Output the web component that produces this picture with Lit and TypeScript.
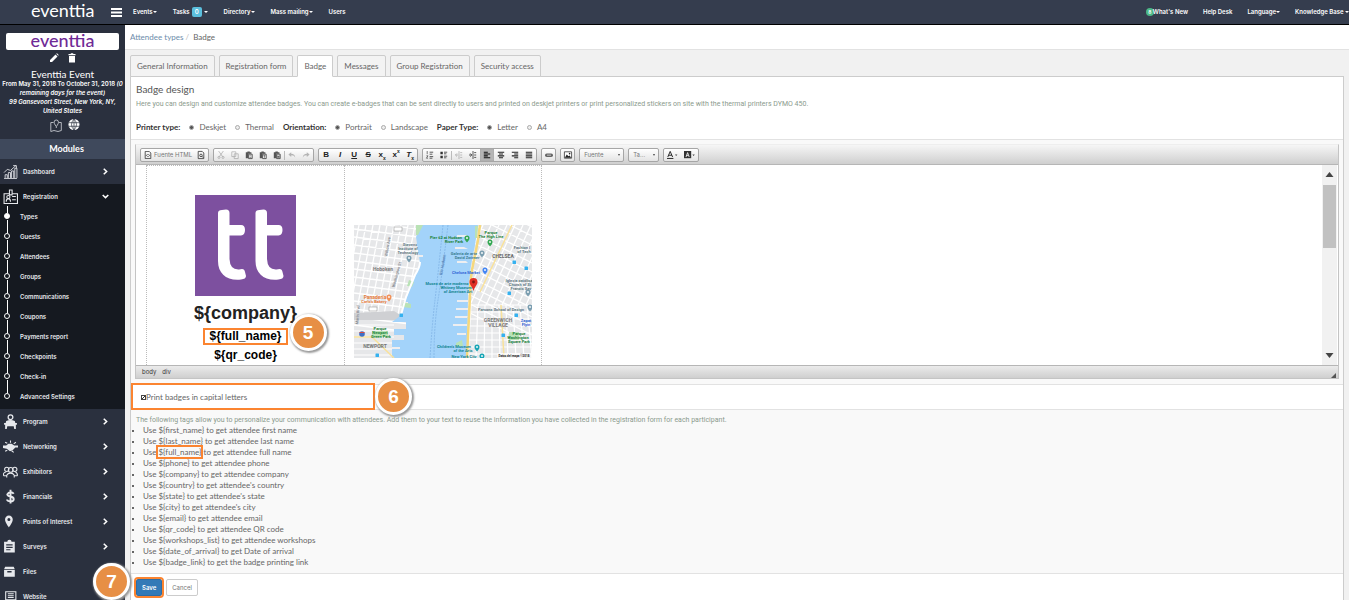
import { LitElement, html, css, svg } from "lit";
import { customElement } from "lit/decorators.js";

const chevR = html`<svg class="chev" viewBox="0 0 6 6"><path d="M1.500 .6 4 3 1.500 5.400" fill="none" stroke="#fff" stroke-width="1.300"/></svg>`;
const chevD = html`<svg class="chev" viewBox="0 0 6 6"><path d="M.6 1.700 3 4 5.400 1.700" fill="none" stroke="#fff" stroke-width="1.300"/></svg>`;

const line = (d: string, w = 1) => svg`<path d=${d} fill="none" stroke="currentColor" stroke-width=${w}/>`;
const solid = (d: string) => svg`<path d=${d} fill="currentColor" fill-rule="evenodd"/>`;

const ICONS: Record<string, unknown> = {
  chart: svg`${line("M1 13.5H13M2 13V10H4V13M5 13V8H7V13M8 13V6.5H10V13M11 13V4H13V13M1 8 4 5 7 6 12 1.5M9.500 1.500H12.500V4", 0.8)}`,
  badge: svg`${line("M1 4.500H13.500V13.500H1ZM3 12Q3 9 5 9Q7 9 7 12M8.500 7H12M8.500 10H12", 1)}<circle cx="5" cy="7.500" r="1.500" fill="none" stroke="currentColor"/><path d="M6 1H8.500V5.500H6Z" fill="#151920" stroke="currentColor"/>`,
  program: svg`<circle cx="7" cy="3" r="2.200" fill="none" stroke="currentColor" stroke-width="1.200"/>${solid("M3 6.500Q7 4.500 11 6.500L11.500 8.500H13V10H12V14H10.500L10 11.500H4L3.500 14H2V10H1V8.500H2.500Z")}`,
  network: svg`${solid("M0 6H3L5 4.500H8L10.500 6H14V8H11.500L9 10.500 6.500 11.500 3.500 9 0 8.500Z")}${line("M2 3 4 4M7 1.500V3.500M12 3 10 4.500M2 11.500 4 10.500M8 11 10 12.500", 1)}`,
  people: svg`<circle cx="3.500" cy="5" r="2" fill="none" stroke="currentColor"/><circle cx="7.200" cy="5.500" r="2.200" fill="none" stroke="currentColor"/><circle cx="11" cy="5" r="2" fill="none" stroke="currentColor"/>${line("M.5 11V9Q1 7.500 3 7.500M3.500 12.500V10.500Q4.500 8.500 7 8.500T10.500 10.500V12.500M11.500 7.500Q13.500 8 13.500 11M.5 11H3M11 11H13.500", 1)}`,
  dollar: svg`${line("M10 4.500Q9 3 7 3T4 5Q4 6.500 7 7T10 9.500Q10 11.500 7 11.500T3.800 9.800M7 .8V13.500", 1.8)}`,
  pin: svg`${solid("M5.500 1.500A3.600 3.600 0 0 1 9.100 5.200C9.100 8 5.500 12.500 5.500 12.500S1.900 8 1.900 5.200A3.600 3.600 0 0 1 5.500 1.500ZM5.500 3.800A1.400 1.400 0 1 0 5.500 6.600 1.400 1.400 0 0 0 5.500 3.800Z")}`,
  clip: svg`${solid("M1 2.500H4A2 1.800 0 0 1 8 2.500H11V12.500H1ZM3 5V6H9V5ZM3 7.300V8.300H9V7.300ZM3 9.600V10.600H7V9.600Z")}`,
  files: svg`${solid("M2 2.500H10L11 5H1ZM1 5.500H11V12H1ZM4 6.500V8H8V6.500Z")}`,
  laptop: svg`${line("M2.500 2.500H12V10H2.500ZM4.500 4.500H10M4.500 6.300H10M4.500 8H10", 1)}${solid("M.5 11H14V12.500H.5Z")}`,
};

const SUB = ["Types", "Guests", "Attendees", "Groups", "Communications", "Coupons", "Payments report", "Checkpoints", "Check-in", "Advanced Settings"];
const MODULES: [string, string, boolean][] = [
  ["program", "Program", true], ["network", "Networking", true], ["people", "Exhibitors", true], ["dollar", "Financials", true],
  ["pin", "Points of Interest", true], ["clip", "Surveys", true], ["files", "Files", false], ["laptop", "Website", false],
];
const TAGS: [string, string][] = [
  ["first_name", "to get attendee first name"], ["last_name", "to get attendee last name"], ["full_name", "to get attendee full name"],
  ["phone", "to get attendee phone"], ["company", "to get attendee company"], ["country", "to get attendee's country"],
  ["state", "to get attendee's state"], ["city", "to get attendee's city"], ["email", "to get attendee email"],
  ["qr_code", "to get attendee QR code"], ["workshops_list", "to get attendee workshops"], ["date_of_arrival", "to get Date of arrival"],
  ["badge_link", "to get the badge printing link"],
];

@customElement("side-bar")
class SideBar extends LitElement {
  static styles = css`
    :host { display: block; background: #2a303e; color: #fff; font-family: Inter, sans-serif; font-size: 6px; }
    .event { padding: 8px 6px 6px; text-align: center; line-height: 9px; }
    .logo { box-sizing: border-box; height: 17px; background: #fff; border-radius: 2px; color: #6f2a96; font: 500 18px/14px Lato, sans-serif; }
    .tools { display: flex; justify-content: center; gap: 8px; padding: 3px 0 6px; }
    .tools button, .links a { display: block; border: 0; padding: 0; background: none; color: #fff; }
    .tools svg { display: block; width: 10px; height: 10px; }
    .name { margin: 0; font: 10px/10px Lato, sans-serif; }
    .dates { margin: 0 -4px; font-weight: 600; }
    .links { display: flex; justify-content: center; gap: 6px; padding: 4px 0 0 4px; }
    .links svg { display: block; width: 12px; height: 14px; }
    .head { margin: 0; background: #3f495c; font: 700 9px/20px Lato, sans-serif; text-align: center; padding-left: 8px; }
    .item { display: flex; align-items: center; height: 25px; padding: 0 16px 0 3px; color: #e6e8ec; text-decoration: none; font-weight: 600; }
    .item svg.ico { width: 15px; height: 15px; margin-right: 5px; }
    .item span { flex: 1; }
    .chev { width: 7px; height: 7px; }
    .open { background: #151920; }
    .sub { list-style: none; margin: 0; padding: 0 0 0 4px; }
    .sub li { height: 20px; position: relative; }
    .sub a { display: flex; align-items: center; height: 14px; gap: 10px; color: #e6e8ec; text-decoration: none; font-weight: 600; }
    .dot { box-sizing: border-box; width: 6px; height: 6px; border: 1px solid #fff; border-radius: 50%; background: #151920; }
    .sub li:first-child .dot { background: #fff; }
    .sub li::before { content: ""; position: absolute; left: 3px; top: -9px; height: 13px; width: 1px; background: #fff; }
    .sub li:first-child::before { top: -3px; height: 7px; }
  `;
  render() {
    return html`
      <section class="event">
        <div class="logo">eventtia</div>
        <div class="tools">
          <button aria-label="Edit"><svg viewBox="0 0 10 10"><path d="M1 9V7L6.500 1.500 8.500 3.500 3 9ZM7.200.8 8 .3 9.700 2 9.200 2.800Z" fill="#fff"/></svg></button>
          <button aria-label="Delete"><svg viewBox="0 0 10 10"><path d="M1.500 1H3.500L4 .3H6L6.500 1H8.500V2.200H1.500ZM2 3H8V9.500H2Z" fill="#fff"/></svg></button>
        </div>
        <h1 class="name">Eventtia Event</h1>
        <div class="dates">From May 31, 2018 To October 31, 2018 <i>(0 remaining days for the event)<br>99 Gansevoort Street, New York, NY, United States</i></div>
        <div class="links">
          <a href="#map" aria-label="Map"><svg viewBox="0 0 12 14"><g fill="none" stroke="#d5d8de" stroke-width=".8"><path d="M3.500 3.500H.8V12.500L4 11.500 8 12.500 11.300 11.500V3.500H9"/><path d="M6.300 1A2.200 2.200 0 0 1 8.500 3.200C8.500 5 6.300 7.500 6.300 7.500S4.100 5 4.100 3.200A2.200 2.200 0 0 1 6.300 1ZM6.300 7.500V9"/></g></svg></a>
          <a href="#web" aria-label="Website"><svg viewBox="0 0 12 14"><circle cx="6" cy="5.500" r="5.500" fill="#fff"/><path d="M1 3.700H11M1 7.300H11M6 0V11M6 0Q1 5.500 6 11M6 0Q11 5.500 6 11" fill="none" stroke="#2a303e" stroke-width=".7"/></svg></a>
        </div>
      </section>
      <h2 class="head">Modules</h2>
      <a class="item" href="#dashboard"><svg class="ico" viewBox="0 0 14 14">${ICONS.chart}</svg><span>Dashboard</span>${chevR}</a>
      <div class="open">
        <a class="item" href="#registration"><svg class="ico" viewBox="0 0 14 14">${ICONS.badge}</svg><span>Registration</span>${chevD}</a>
        <ul class="sub">${SUB.map(s => html`<li><a href="#sub"><i class="dot"></i>${s}</a></li>`)}</ul>
      </div>
      ${MODULES.map(([i, n, c]) => html`<a class="item" href="#module"><svg class="ico" viewBox="0 0 14 14">${ICONS[i]}</svg><span>${n}</span>${c ? chevR : ""}</a>`)}
    `;
  }
}

@customElement("city-map")
class CityMap extends LitElement {
  static styles = css`
    :host { display: block; }
    svg { display: block; width: 178px; height: 133px; }
    text { font-family: Roboto, sans-serif; text-anchor: middle; }
  `;
  render() {
    const streets = (n: number, f: (i: number) => string) => Array.from({ length: n }, (_, i) => f(i)).join("");
    const pins: [number, number, string][] = [[113, 14, "#34a853"], [136, 18, "#34a853"], [55, 34, "#7b9eb0"], [128, 29, "#7b9eb0"], [131, 46, "#4285f4"], [35, 73, "#f29157"], [174, 68, "#7b9eb0"], [176, 83, "#7b9eb0"], [123, 123, "#16a5b5"], [128, 132, "#16a5b5"]];
    const labels: [number, number, string, string, number?][] = [
      [92, 14, "Pier 62 at Hudson", "#188038"], [100, 18, "River Park", "#188038"], [137, 9, "Parque", "#188038"], [137, 13, "The High Line", "#188038"],
      [56, 21, "Stevens", "#5f7883"], [54, 25, "Institute of", "#5f7883"], [54, 29, "Technology", "#5f7883"], [29, 46, "Hoboken", "#7a7a7a", 5],
      [110, 30, "Galería de arte", "#3c7d92"], [113, 34, "David Zwirner", "#3c7d92"], [149, 33, "CHELSEA", "#666", 5], [112, 49, "Chelsea Market", "#3367d6"],
      [93, 60, "Museo de arte moderno", "#128593"], [102, 64, "Whitney Museum", "#128593"], [104, 68, "of American Art", "#128593"],
      [21, 74, "Panadería", "#e67c3c", 5], [20, 78, "Carlo's Bakery", "#e67c3c"], [147, 86, "Parsons School of Design", "#5f7883"],
      [144, 97, "GREENWICH", "#777", 5], [144, 102, "VILLAGE", "#777", 5], [26, 105, "Parque", "#188038"], [26, 109, "Newport", "#188038"], [27, 113, "Green Park", "#188038"],
      [21, 123, "NEWPORT", "#777", 5], [100, 123, "Children's Museum", "#128593"], [109, 127, "of the Arts", "#128593"], [110, 133, "New York City", "#128593"],
      [165, 110, "Parque", "#188038"], [164, 114, "Washington", "#188038"], [165, 118, "Square Park", "#188038"], [168, 24, "Fashion I", "#5f7883"], [170, 28, "of Tech", "#5f7883"],
      [165, 57, "Iglesia católica", "#5f7883"], [166, 61, "Church of St", "#5f7883"], [167, 65, "Francis Xav", "#5f7883"], [172, 97, "Zapat", "#3367d6"], [172, 101, "Flyin", "#3367d6"],
    ];
    return html`<svg viewBox="0 0 178 133" role="img" aria-label="Map of Hudson River and Chelsea">
      <rect width="178" height="133" fill="#e6e7e9"/>
      <path d=${streets(15, i => `M${i * 7 - 2} 0 ${i * 7 - 20} 95`) + streets(14, i => `M0 ${i * 8 - 4}L72 ${i * 8 + 5}`)} stroke="#fff" stroke-width="1.300" fill="none"/>
      <path d=${streets(14, i => `M${i * 8 + 113} 0 ${i * 8 + 76} 80`) + streets(14, i => `M114 ${i * 9 - 30}L178 ${i * 9 + 2}`)} stroke="#fff" stroke-width="1.300" fill="none"/>
      <path d=${streets(11, i => `M${i * 7 + 110} 80 ${i * 8 + 106} 133`) + streets(8, i => `M114 ${i * 7 + 80}H178M0 ${i * 6 + 100}H40`)} stroke="#fff" stroke-width="1.200" fill="none"/>
      <path d="M0 88 40 86 48 91 46 95H0Z" fill="#cfd0d3"/>
      <path d="M68 0H124L121 20 117 40 114 70 113 133H38V115H50V110H40V104H52V97H38L46 91 52 74 60 52 66 38 64 25 62 12Z" fill="#a3d3fa"/>
      <path d="M113 10H103V12H113M110 22H101V24H114M112 36H103V38H114M114 75H103V77H114M114 83H102V85H114M114 91H101V93H113M113 99H99V101H113M112 108H103V110H112M53 60H58V62H52M49 77H54V79H48M64 30H69V32H64M38 122H46V124H38" fill="#eeeef0"/>
      <path d="M62 0H69L64 10H62ZM55 55 60 57 58 62 53 61ZM49 77 57 79 57 83 48 82ZM18 106H34V112H18ZM102 118 108 115 109 121 102 122ZM155 107H165V115H155ZM121 1H124L123 13H121Z" fill="#b9e2b5"/>
      <path d="M66 37Q66 42 61 50L52 72 47 90" fill="none" stroke="#fff" stroke-width="2"/>
      <path d="M89 0Q84 50 81 75T76 133M94 0Q88 50 84 75T80 133" fill="none" stroke="#76a9df" stroke-width=".6" stroke-dasharray="2 1"/>
      <path d="M126 0Q124 18 120 35T116 70L113 133" fill="none" stroke="#f6d87c" stroke-width="2.500"/>
      <path d="M158 0 126 67M147 80 150 133M0 112H18L40 133" fill="none" stroke="#f9e29b" stroke-width="1.500"/>
      <g fill="#8a8f96" font-size="4"><text transform="translate(44 50) rotate(-74)">Washington St</text><text transform="translate(5 90) rotate(-86)">Marin Blvd</text><text transform="translate(35 22) rotate(-80)">Willow Ave</text></g>
      <text transform="translate(90 40) rotate(-80)" font-size="4" fill="#5681b5">Río Hudson</text>
      ${labels.map(([x, y, t, c, s]) => svg`<text x=${x} y=${y} fill=${c} font-size=${s ?? 4}>${t}</text>`)}
      ${pins.map(([x, y, c]) => svg`<path transform="translate(${x} ${y})" d="M0 3.500C-2 1-2.500.5-2.500-1A2.500 2.500 0 0 1 2.500-1C2.500.5 2 1 0 3.500Z" fill=${c}/><circle cx=${x} cy=${y - 1} r=".9" fill="#fff"/>`)}
      ${[[47, 90], [23, 130], [149, 110], [160, 37], [155, 68], [172, 43], [162, 90]].map(([x, y]) => svg`<rect x=${x - 1.5} y=${y - 1.5} width="3.500" height="3.500" rx=".6" fill="#35b1ef"/>`)}
      <rect x="40" y="2" width="8" height="4" fill="#fff" stroke="#888" stroke-width=".5"/><rect x="15" y="82" width="8" height="4" fill="#fff" stroke="#888" stroke-width=".5"/>
      <circle cx="8" cy="109" r="2.800" fill="#3f6fc4"/><path d="M5.500 107.500H10.500" stroke="#d94a3d" stroke-width="1"/>
      <path d="M119.500 66C118 61 115.500 60 115.500 57A4 4 0 0 1 123.500 57C123.500 60 121 61 119.500 66Z" fill="#e02f26"/><circle cx="119.500" cy="57" r="1.400" fill="#7c150f"/>
      <rect x="143" y="128" width="35" height="5" fill="#fff" opacity=".6"/><text x="160" y="132" fill="#222" font-size="3">Datos del mapa ©2018</text>
    </svg>`;
  }
}

const k = (body: unknown, label: string, cls = "") => html`<button class="k ${cls}" aria-label=${label}><svg viewBox="0 0 10 10">${body}</svg></button>`;
const doc = "M1.500.5H6.500L8.500 2.500V9.500H1.500Z";
const al = (a: number, b: number) => svg`<path d="M1 1.500H9M${a} 3.800H${b}M1 6.100H9M${a} 8.400H${b}" stroke="#222" stroke-width="1.300"/>`;
const paste = (e: unknown) => svg`<path d="M1 1.500H3V.5H6V1.500H8V3.500H4V9H1Z" fill="#555"/><path d="M4.500 4H9V9.500H4.500Z" fill="#fff" stroke="#333"/>${e}`;

@customElement("badge-editor")
class BadgeEditor extends LitElement {
  static styles = css`
    :host { display: block; margin: 4px 4px 5px; border: 1px solid #c4c4c4; border-top-color: #eee; font-family: "Open Sans", sans-serif; background: #fff; }
    .bar { display: flex; gap: 4px; padding: 3px 4px 2px; background: linear-gradient(#f6f6f6, #cfcfcf); border-bottom: 1px solid #b6b6b6; }
    .grp { display: flex; align-items: center; box-sizing: border-box; height: 14px; border: 1px solid #a6a6a6; border-radius: 2px; background: linear-gradient(#fff, #e4e4e4); }
    .k, .wide { border: 0; background: none; padding: 0; }
    .k { width: 14px; height: 12px; display: grid; place-items: center; }
    .k svg { width: 8px; height: 8px; overflow: visible; }
    .solo { width: 13px; }
    .tint { width: 17px; padding-right: 4px; }
    .dim { opacity: .35; }
    .on { background: #b5b5b5; box-shadow: inset 0 0 1px #777; }
    .fmt { font: bold 8px/12px "Liberation Sans", sans-serif; color: #222; text-align: center; }
    .fmt sub, .fmt sup { font-size: 5px; line-height: 0; }
    .wide { display: flex; align-items: center; gap: 2px; height: 12px; padding: 0 2px 0 3px; font: 6px/12px Inter, sans-serif; color: #777; }
    .wide svg { width: 8px; height: 8px; }
    .sep { width: 1px; height: 9px; background: #bbb; }
    select { appearance: none; border: 0; background: none; height: 12px; padding: 0 4px; font: 6px/12px Inter, sans-serif; color: #777; }
    .font { width: 43px; } .size { width: 29px; }
    .drop { position: relative; }
    .drop::after { content: ""; position: absolute; right: 3px; top: 5px; border: 1px solid transparent; border-top: 2px solid #444; }
    .canvas { display: flex; height: 200px; background: #fff; }
    .sheet { display: flex; flex: 1; padding-left: 10px; }
    .page { box-sizing: border-box; width: 198px; border-top: 1px dotted #bbb; border-left: 1px dotted #bbb; display: flex; flex-direction: column; align-items: center; color: #222; font: bold 12px/18px "Liberation Sans", sans-serif; }
    .page + .page { border-right: 1px dotted #bbb; }
    .tt { width: 101px; height: 101px; margin: 29px 0 6px; display: block; }
    .company { font-size: 18px; line-height: 22px; margin: 0 0 6px; }
    .mark { position: relative; outline: 2px solid #fb8430; padding: 0 4px; line-height: 13px; margin-bottom: 3px; color: #000; }
    .last { color: #000; }
    .num { position: absolute; left: calc(100% + 4px); top: -16px; }
    city-map { margin-top: 59px; }
    .scroll { width: 15px; background: #f1f1f1; display: flex; flex-direction: column; align-items: center; margin-right: 1px; }
    .scroll svg { width: 9px; height: 20px; }
    .thumb { width: 13px; height: 63px; background: #c1c1c1; margin-bottom: auto; }
    .path { display: flex; align-items: center; gap: 6px; height: 12px; padding: 0 2px 0 6px; border-top: 1px solid #b6b6b6; background: linear-gradient(#ebebeb, #cfcfcf); font: 6px/12px Inter, sans-serif; color: #333; }
    .grip { width: 5px; height: 5px; margin-left: auto; align-self: flex-end; }
  `;
  render() {
    const find = svg`<path d=${doc} fill="none" stroke="#333"/><circle cx="5" cy="5.500" r="1.600" fill="none" stroke="#333"/><path d="M6 6.500 8 8.500" stroke="#333"/>`;
    return html`
      <div class="bar" role="toolbar">
        <div class="grp"><button class="wide"><svg viewBox="0 0 10 10"><path d=${doc} fill="none" stroke="#333"/><path d="M4.500 4 3 5.500 4.500 7M5.500 4 7 5.500 5.500 7" fill="none" stroke="#333"/></svg>Fuente HTML</button>${k(find, "Preview")}</div>
        <div class="grp">
          ${k(svg`<path d="M2 0 7 7M8 0 3 7" stroke="#333"/><circle cx="2.500" cy="8" r="1.300" fill="none" stroke="#333"/><circle cx="7.500" cy="8" r="1.300" fill="none" stroke="#333"/>`, "Cut", "dim")}
          ${k(svg`<path d="M1 1H6V7H1ZM4 3.500H9V9.500H4Z" fill="#fff" stroke="#333"/>`, "Copy", "dim")}
          ${k(paste(svg`<path d="M5.500 6H8M5.500 8H8" stroke="#333" stroke-width=".7"/>`), "Paste")}
          ${k(paste(svg`<path d="M5.500 5.800H8M6.700 5.800V8.500" stroke="#333" stroke-width=".8"/>`), "Paste text")}
          ${k(paste(svg`<path d="M5.500 5.500 6 8.500 6.800 6 7.500 8.500 8 5.500" fill="none" stroke="#333" stroke-width=".7"/>`), "Paste from Word")}
          <i class="sep"></i>
          ${k(svg`<path d="M4 1.500.5 4.500 4 7.500V5.500Q7.500 5 9 8 8.500 3.500 4 3.500Z" fill="#444"/>`, "Undo", "dim")}
          ${k(svg`<path d="M6 1.500 9.500 4.500 6 7.500V5.500Q2.500 5 1 8 1.500 3.500 6 3.500Z" fill="#444"/>`, "Redo", "dim")}
        </div>
        <div class="grp">
          <button class="k fmt">B</button><button class="k fmt"><i>I</i></button><button class="k fmt"><u>U</u></button><button class="k fmt"><s>S</s></button>
          <button class="k fmt"><span>x<sub>x</sub></span></button><button class="k fmt"><span>x<sup>x</sup></span></button><button class="k fmt"><span><i>T</i><sub>x</sub></span></button>
        </div>
        <div class="grp">
          ${k(svg`<path d="M4.500 1.500H9M4.500 4H8M4.500 7H9M4.500 9H8" stroke="#333"/><path d="M1.500 0V4M.5 6H2.500L.5 9H2.500" fill="none" stroke="#333" stroke-width=".8"/>`, "Numbered list")}
          ${k(svg`<path d="M.5 1H3.500V4H.5ZM.5 6H3.500V9H.5Z" fill="#333"/><path d="M5 1.500H9M5 3.500H8M5 6.500H9M5 8.500H8" stroke="#333"/>`, "Bulleted list")}
          <i class="sep"></i>
          ${k(svg`<path d="M5 0V10M6.500 2H9M6.500 5H9M6.500 8H9M4 5H.5M2.500 3 .5 5 2.500 7" fill="none" stroke="#333"/>`, "Outdent", "dim")}
          ${k(svg`<path d="M5 0V10M6.500 2H9M6.500 5H9M6.500 8H9M0 5H3.500M1.500 3 3.500 5 1.500 7" fill="none" stroke="#333"/>`, "Indent")}
          ${k(svg`<path d="M1 1.500H6M1 3.800H9M1 6.100H6M1 8.400H9" stroke="#111" stroke-width="1.300"/>`, "Left", "on")}${k(al(2.5, 7.5), "Centre")}${k(al(4, 9), "Right")}${k(al(1, 9), "Justify")}
        </div>
        <div class="grp">${k(svg`<rect x="0" y="3" width="10" height="4.500" rx="2.200" fill="#666"/><path d="M2.500 5.200H7.500" stroke="#ddd"/>`, "Link", "solo")}</div>
        <div class="grp">${k(svg`<path d="M.5 1H9.500V9H.5Z" fill="#fff" stroke="#333"/><path d="M1 8.500 3.500 4.500 5.500 6.500 7 5.500 9 8.500Z" fill="#222"/><circle cx="7" cy="3.300" r="1" fill="#222"/>`, "Image", "solo")}</div>
        <div class="grp drop"><select class="font" aria-label="Font"><option>Fuente</option></select></div>
        <div class="grp drop"><select class="size" aria-label="Size"><option>Ta...</option></select></div>
        <div class="grp">
          ${k(svg`<path d="M1 7.500 4 .5 7 7.500M2 5.300H6M0 9.300H8" fill="none" stroke="#222" stroke-width="1.200"/><path d="M10 4.500H13L11.500 6.200Z" fill="#444"/>`, "Text colour", "tint")}
          ${k(svg`<path d="M0 0H9V9H0Z" fill="#333"/><path d="M2.500 7.500 4.500 2 6.500 7.500M3.200 5.500H5.800" fill="none" stroke="#fff"/><path d="M10.500 4.500H13.500L12 6.200Z" fill="#444"/>`, "Background colour", "tint")}
        </div>
      </div>
      <div class="canvas">
        <div class="sheet">
          <div class="page">
            <svg class="tt" viewBox="0 0 101 101" role="img" aria-label="tt"><rect width="101" height="101" fill="#7d509f"/>${[0, 37.5].map(x => svg`<path transform="translate(${x} 0)" d="M23 18Q23 15 27 15L31 14.500Q34.500 14.500 34.500 18V30H46Q50 30 50 35T46 40.500H34.500V64Q35 75 44 74.500L47 74Q49.500 74 50 77L51 81Q51 84 46 84.500C32 86 23 79 23 66Z" fill="#fff"/>`)}</svg>
            <p class="company">\${company}</p>
            <span class="mark">\${full_name}<step-mark class="num" n="5"></step-mark></span>
            <span class="last">\${qr_code}</span>
          </div>
          <div class="page"><city-map></city-map></div>
        </div>
        <div class="scroll"><svg viewBox="0 0 9 20"><path d="M.5 12 4.500 7 8.500 12Z" fill="#444"/></svg><div class="thumb"></div><svg viewBox="0 0 9 20"><path d="M.5 8 4.500 13 8.500 8Z" fill="#444"/></svg></div>
      </div>
      <div class="path"><span>body</span><span>div</span><svg class="grip" viewBox="0 0 5 5"><path d="M5 0V5H0Z" fill="#555"/></svg></div>
    `;
  }
}

@customElement("step-mark")
class StepMark extends LitElement {
  static properties = { n: {} };
  declare n: string;
  static styles = css`
    :host { box-sizing: border-box; width: 37px; height: 37px; border: 3px solid #fff; border-radius: 50%; background: #e78f45; box-shadow: 1px 1px 2px 1px #999; display: grid; place-items: center; color: #fff; font: bold 19px/20px "Liberation Sans", sans-serif; z-index: 2; }
  `;
  render() { return html`${this.n}`; }
}

@customElement("app-root")
class AppRoot extends LitElement {
  static styles = css`
    :host { display: block; height: 100vh; overflow: hidden; font-family: Lato, sans-serif; font-size: 8px; line-height: 11px; color: #666; background: #f1f1f1; }
    .top { display: flex; align-items: center; height: 24px; background: #353d4e; color: #fff; border-bottom: 1px solid #000; font: 600 6px/10px Inter, sans-serif; }
    .top a { color: #fff; text-decoration: none; white-space: nowrap; display: flex; align-items: center; }
    .brand { width: 65px; margin-left: 31px; padding-bottom: 4px; font: 18px/20px Lato, sans-serif; }
    .menu { border: 0; background: none; padding: 0; margin: 0 11px 0 15px; }
    .menu svg { display: block; width: 11px; height: 9px; }
    .nav { display: flex; gap: 16px; flex: 1; }
    .right { flex: none; gap: 15px; }
    .caret { border: 2px solid transparent; border-top-color: #fff; border-bottom: 0; }
    .cnt { background: #5bc0de; border-radius: 2px; padding: 0 3px; margin: 0 2px; }
    .green { width: 8px; height: 8px; border-radius: 50%; background: #4cb887; color: #fff; font-size: 5px; line-height: 8px; text-align: center; margin-right: -1px; }
    .cols { display: flex; }
    side-bar { width: 125px; flex: none; }
    main { flex: 1; min-width: 0; display: flex; flex-direction: column; }
    .crumb { background: #fff; border-bottom: 1px solid #e2e2e2; padding: 0 5px; line-height: 24px; }
    .crumb a { color: #6d8cab; text-decoration: none; }
    .crumb i { color: #bbb; margin: 0 2px; font-style: normal; }
    .tabs { display: flex; gap: 4px; margin: 5px 5px -1px; position: relative; }
    .tabs button { box-sizing: border-box; height: 22px; padding: 0 6px; border: 1px solid #ccc; border-radius: 2px 2px 0 0; background: #f3f3f3; color: #666; font: 8px/20px Lato, sans-serif; }
    .tabs .cur { background: #fff; border-bottom-color: #fff; }
    .panel { flex: 1; margin: 0 5px; border: 1px solid #ccc; background: #fff; }
    .intro { padding: 6px 5px; }
    h2 { margin: 0; font: 10px/12px Lato, sans-serif; color: #555; }
    .hint { margin: 0; font: 7px/10px Roboto, sans-serif; color: #8b9a8d; }
    .intro .hint { margin-top: 4px; }
    .opts { display: flex; align-items: center; gap: 9px; margin-top: 12px; line-height: 12px; }
    .opts b { font-weight: 700; color: #333; }
    .opts label { display: flex; align-items: center; gap: 5px; }
    input { margin: 0; appearance: none; box-sizing: border-box; width: 5px; height: 5px; border: 1px solid #aaa; background: #eee; }
    input[type="radio"] { border-radius: 50%; }
    input[type="radio"]:checked { background: #555; }
    .gray { background: #f9f9f9; border-top: 1px solid #e2e2e2; display: flow-root; }
    .caps { position: relative; background: #fff; border: solid #e2e2e2; border-width: 1px 0; height: 24px; display: flex; align-items: center; padding-left: 10px; }
    .caps label { display: flex; align-items: center; }
    .caps input:checked { border-color: #444; background: linear-gradient(135deg, #fff 40%, #333 40%, #333 65%, #fff 65%); }
    .frame { position: absolute; left: 0; top: -2px; width: 240px; height: 23px; border: 2px solid #fb8430; }
    .s6 { position: absolute; left: 244px; top: -7px; }
    .tags { padding: 5px 5px; }
    ul { margin: 0; padding-left: 7px; list-style: square; }
    li::marker { font-size: 6px; }
    .mark { outline: 2px solid #fb8430; }
    .foot { position: relative; border-top: 1px solid #e2e2e2; display: flex; gap: 4px; padding: 5px; }
    .foot button { box-sizing: border-box; height: 17px; border: 1px solid #ccc; border-radius: 2px; background: #fff; color: #777; padding: 0 5px; font: 6px/15px Inter, sans-serif; }
    .foot .save { background: #337ab7; border-color: #2e6da4; color: #fff; font-weight: 600; outline: 2px solid #fb8430; }
    .s7 { position: absolute; left: -38px; top: -11px; }
  `;
  render() {
    const caret = html`<i class="caret"></i>`;
    const radio = (g: string, t: string, c = false) => html`<label><input type="radio" name=${g} ?checked=${c}>${t}</label>`;
    return html`
      <header class="top">
        <div class="brand">eventtia</div>
        <button class="menu" aria-label="Menu"><svg viewBox="0 0 11 9"><path d="M0 1H11M0 4.500H11M0 8H11" stroke="#fff" stroke-width="2"/></svg></button>
        <nav class="nav"><a href="#e">Events${caret}</a><a href="#t">Tasks<span class="cnt">0</span>${caret}</a><a href="#d">Directory${caret}</a><a href="#m">Mass mailing${caret}</a><a href="#u">Users</a></nav>
        <nav class="nav right"><a href="#w"><span class="green">8</span>What's New</a><a href="#h">Help Desk</a><a href="#l">Language${caret}</a><a href="#k">Knowledge Base&nbsp;${caret}</a></nav>
      </header>
      <div class="cols">
        <side-bar></side-bar>
        <main>
          <div class="crumb"><a href="#types">Attendee types</a><i>/</i> Badge</div>
          <div class="tabs">${["General Information", "Registration form", "Badge", "Messages", "Group Registration", "Security access"].map(t => html`<button class=${t === "Badge" ? "cur" : ""}>${t}</button>`)}</div>
          <section class="panel">
            <div class="intro">
              <h2>Badge design</h2>
              <p class="hint">Here you can design and customize attendee badges. You can create e-badges that can be sent directly to users and printed on deskjet printers or print personalized stickers on site with the thermal printers DYMO 450.</p>
              <div class="opts"><b>Printer type:</b>${radio("p", "Deskjet", true)}${radio("p", "Thermal")}<b>Orientation:</b>${radio("o", "Portrait", true)}${radio("o", "Landscape")}<b>Paper Type:</b>${radio("s", "Letter", true)}${radio("s", "A4")}</div>
            </div>
            <div class="gray">
              <badge-editor></badge-editor>
              <div class="caps"><label><input type="checkbox" checked>Print badges in capital letters</label><i class="frame"></i><step-mark class="s6" n="6"></step-mark></div>
              <div class="tags">
                <p class="hint">The following tags allow you to personalize your communication with attendees. Add them to your text to reuse the information you have collected in the registration form for each participant.</p>
                <ul>${TAGS.map(([t, d]) => html`<li>Use <span class=${t === "full_name" ? "mark" : ""}>\${${t}}</span> ${d}</li>`)}</ul>
              </div>
            </div>
            <div class="foot"><button class="save">Save</button><button>Cancel</button><step-mark class="s7" n="7"></step-mark></div>
          </section>
        </main>
      </div>
    `;
  }
}
